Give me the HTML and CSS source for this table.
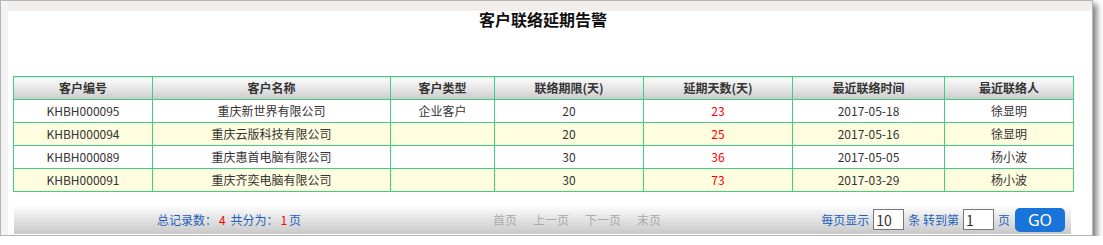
FILE: index.html
```html
<!DOCTYPE html>
<html lang="zh-CN">
<head>
<meta charset="utf-8">
<title>客户联络延期告警</title>
<link rel="stylesheet" href="styles.css">
</head>
<body>
<div class="frame">
  <div class="side"></div>
  <div class="main">
    <div class="topbar"></div>
    <h1 class="title">客户联络延期告警</h1>
    <table class="grid">
      <colgroup>
        <col class="c1"><col class="c2"><col class="c3"><col class="c4"><col class="c5"><col class="c6"><col class="c7">
      </colgroup>
      <thead>
        <tr><th>客户编号</th><th>客户名称</th><th>客户类型</th><th>联络期限(天)</th><th>延期天数(天)</th><th>最近联络时间</th><th>最近联络人</th></tr>
      </thead>
      <tbody>
        <tr><td>KHBH000095</td><td>重庆新世界有限公司</td><td>企业客户</td><td>20</td><td class="red">23</td><td>2017-05-18</td><td>徐显明</td></tr>
        <tr class="alt"><td>KHBH000094</td><td>重庆云版科技有限公司</td><td></td><td>20</td><td class="red">25</td><td>2017-05-16</td><td>徐显明</td></tr>
        <tr><td>KHBH000089</td><td>重庆惠首电脑有限公司</td><td></td><td>30</td><td class="red">36</td><td>2017-05-05</td><td>杨小波</td></tr>
        <tr class="alt"><td>KHBH000091</td><td>重庆齐奕电脑有限公司</td><td></td><td>30</td><td class="red">73</td><td>2017-03-29</td><td>杨小波</td></tr>
      </tbody>
    </table>
    <div class="pager">
      <div class="stat">总记录数：<span class="num">4</span> 共分为：<span class="num">1</span>页</div>
      <div class="nav">
        <span class="link">首页</span>
        <span class="link">上一页</span>
        <span class="link">下一页</span>
        <span class="link">末页</span>
      </div>
      <div class="jump">
        <span>每页显示</span>
        <input class="box" type="text" value="10">
        <span>条 转到第</span>
        <input class="box" type="text" value="1">
        <span>页</span>
        <button class="go" type="button">GO</button>
      </div>
    </div>
  </div>
</div>
</body>
</html>
```

FILE: styles.css
```css
html, body {
  margin: 0;
  padding: 0;
  background: #ffffff;
}

body {
  font-family: "Noto Sans CJK SC", "Noto Sans", sans-serif;
  font-size: 12px;
  color: #333333;
}

.frame {
  display: flex;
  width: 1091px;
  height: 234px;
  border: 1px solid #b4b4b4;
  box-shadow: 4px 4px 6px rgba(0, 0, 0, 0.5);
  background: #ffffff;
  overflow: hidden;
}

.side {
  width: 7px;
  flex: none;
  background: #f3f3f3;
}

.main {
  flex: 1;
  display: flex;
  flex-direction: column;
}

.topbar {
  height: 10px;
  background: #f2eeeb;
}

.title {
  margin: 0 0 49px 5px;
  width: 1060px;
  font-size: 16px;
  line-height: 16px;
  font-weight: bold;
  text-align: center;
  color: #111111;
}

.grid {
  margin-left: 5px;
  width: 1060px;
  border-collapse: collapse;
  table-layout: fixed;
}

.c1 { width: 139px; }
.c2 { width: 238px; }
.c3 { width: 104px; }
.c4 { width: 149px; }
.c5 { width: 149px; }
.c6 { width: 152px; }
.c7 { width: 129px; }

.grid th,
.grid td {
  border: 1px solid #3ecf80;
  padding: 0;
  height: 22px;
  line-height: 22px;
  text-align: center;
  white-space: nowrap;
  overflow: hidden;
}

.grid th {
  font-weight: bold;
  color: #333333;
  background: linear-gradient(#fbfbfb, #e6e6e6 50%, #cbcbcb);
}

.grid td {
  background: #ffffff;
  color: #333333;
}

.grid tr.alt td {
  background: #fefde0;
}

.grid td.red {
  color: #ff0000;
}

.pager {
  margin: 13px 0 0 6px;
  width: 1057px;
  height: 29px;
  display: flex;
  align-items: center;
  background: linear-gradient(#ffffff, #ebebeb 35%, #c8c8c8);
}

.stat {
  width: 336px;
  padding-left: 143px;
  flex: none;
  color: #1f5fbd;
}

.stat .num {
  color: #ff0000;
  margin: 0 2px;
}

.nav {
  display: flex;
  gap: 16px;
  color: #aaaaaa;
}

.jump {
  margin-left: auto;
  padding-right: 6px;
  display: flex;
  align-items: center;
  gap: 4px;
  color: #1f5fbd;
}

.box {
  width: 31px;
  height: 21px;
  box-sizing: border-box;
  border: 1px solid #777777;
  padding: 0 2px;
  font-family: "Noto Sans CJK SC", "Noto Sans", sans-serif;
  font-size: 14px;
  color: #333333;
  background: #ffffff;
  outline: none;
}

.go {
  width: 50px;
  height: 24px;
  border: none;
  border-radius: 5px;
  background: #1874d8;
  color: #ffffff;
  font-family: "Noto Sans", sans-serif;
  font-size: 16px;
  line-height: 24px;
  padding: 0;
  margin-left: 1px;
}
```
